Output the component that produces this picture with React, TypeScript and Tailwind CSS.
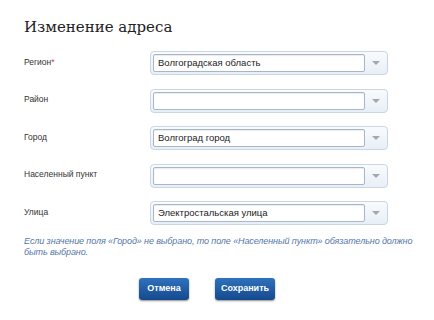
import React from 'react';

const rows = [
    { label: 'Регион', required: true, value: 'Волгоградская область' },
    { label: 'Район', value: '' },
    { label: 'Город', value: 'Волгоград город' },
    { label: 'Населенный пункт', value: '' },
    { label: 'Улица', value: 'Электростальская улица' },
];

function SelectBox({ value }: { value: string }) {
    return (
        <div className="w-[238px] h-[24px] flex items-center rounded-[4px] border border-[#c9d6e6] bg-gradient-to-b from-[#f9fbfd] to-[#e9eff7] pl-[2px]">
            <div className="w-[212px] h-[18px] flex items-center bg-white border border-[#a8b6c8] rounded-[2px] px-[4px] text-[9.5px] text-[#222] shadow-[inset_0_1px_1px_rgba(0,0,0,0.08)]">
                {value}
            </div>
            <div className="flex-1 flex items-center justify-center">
                <div className="w-0 h-0 border-l-[4px] border-r-[4px] border-t-[4px] border-l-transparent border-r-transparent border-t-[#a0a8b3]" />
            </div>
        </div>
    );
}

export default function App() {
    return (
        <div className="w-[434px] h-[320px] bg-white px-6 pt-[17px] font-['Liberation_Sans',Arial,sans-serif]">
            <h1 className="text-[15px] leading-[20px] text-[#222] font-['DejaVu_Serif',serif]">Изменение адреса</h1>
            <div className="mt-[14px] flex flex-col gap-[13.5px]">
                {rows.map((r) => (
                    <div key={r.label} className="flex items-center">
                        <div className="w-[126px] text-[8.5px] text-[#333] -mt-[2px]">
                            {r.label}
                            {r.required && <span className="text-[#d0393e]">*</span>}
                        </div>
                        <SelectBox value={r.value} />
                    </div>
                ))}
            </div>
            <p className="mt-[11px] -mr-[6px] text-[9px] leading-[11px] tracking-[-0.1px] italic text-[#5577aa]">
                Если значение поля «Город» не выбрано, то поле «Населенный пункт» обязательно должно быть выбрано.
            </p>
            <div className="mt-[20px] flex gap-[26px] pl-[115px]">
                <button className="w-[50px] h-[22px] rounded-[3px] bg-gradient-to-b from-[#2f72bd] to-[#15498d] text-white text-[9px] font-bold shadow-[0_1px_2px_rgba(0,0,0,0.45)]">
                    Отмена
                </button>
                <button className="w-[60px] h-[22px] rounded-[3px] bg-gradient-to-b from-[#2f72bd] to-[#15498d] text-white text-[9px] font-bold shadow-[0_1px_2px_rgba(0,0,0,0.45)]">
                    Сохранить
                </button>
            </div>
        </div>
    );
}
